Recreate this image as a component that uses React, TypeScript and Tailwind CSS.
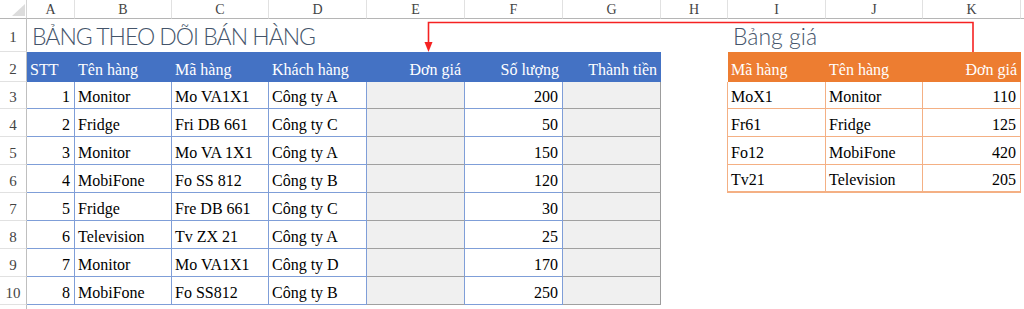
import React from 'react';

const serif = "font-['Liberation_Serif','Times_New_Roman',serif]";

const sales: [number, string, string, string, number][] = [
    [1, 'Monitor', 'Mo VA1X1', 'Công ty A', 200],
    [2, 'Fridge', 'Fri DB 661', 'Công ty C', 50],
    [3, 'Monitor', 'Mo VA 1X1', 'Công ty A', 150],
    [4, 'MobiFone', 'Fo SS 812', 'Công ty B', 120],
    [5, 'Fridge', 'Fre DB 661', 'Công ty C', 30],
    [6, 'Television', 'Tv ZX 21', 'Công ty A', 25],
    [7, 'Monitor', 'Mo VA1X1', 'Công ty D', 170],
    [8, 'MobiFone', 'Fo SS812', 'Công ty B', 250],
];

const prices: [string, string, number][] = [
    ['MoX1', 'Monitor', 110],
    ['Fr61', 'Fridge', 125],
    ['Fo12', 'MobiFone', 420],
    ['Tv21', 'Television', 205],
];

const letters = ['A', 'B', 'C', 'D', 'E', 'F', 'G', 'H', 'I', 'J', 'K'];

function RowNum({ n }: { n: number | string }) {
    return (
        <div className={`flex items-center justify-center pt-[5px] border-r border-r-[#bfbfbf] border-b border-b-[#e1e1e1] text-[15px] text-[#444] ${serif}`}>
            {n}
        </div>
    );
}

export default function App() {
    const head = `flex items-end pb-[4px] text-white text-[16px] leading-none whitespace-nowrap ${serif}`;
    return (
        <div className={`relative w-[1024px] h-[309px] overflow-hidden bg-white text-black ${serif}`}>
            <div className="grid grid-cols-[27px_48px_97px_97px_98px_98px_98px_98px_67px_98px_97px_98px_3px] grid-rows-[19px_33px_30px_27px_28px_28px_28px_28px_28px_28px_28px_4px]">
                {/* column headers */}
                <div className="relative border-r border-r-[#d4d4d4] border-b border-b-[#b5b5b5]">
                    <svg className="absolute left-0 top-0" width="27" height="19">
                        <polygon points="12,16 25,16 25,4" fill="#dcdcdc" />
                    </svg>
                </div>
                {letters.map((l) => (
                    <div key={l} className={`flex items-center justify-center border-r border-r-[#e1e1e1] border-b border-b-[#b5b5b5] text-[14px] text-[#444] ${serif}`}>
                        {l}
                    </div>
                ))}
                <div className="border-b border-b-[#b5b5b5]" />

                {/* row 1: titles */}
                <RowNum n={1} />
                <div className="col-span-7 flex items-end pl-[5px] pb-[4px] font-['Lato',sans-serif] font-light text-[23px] tracking-[-1px] leading-none text-[#44546a] whitespace-nowrap">
                    BẢNG THEO DÕI BÁN HÀNG
                </div>
                <div />
                <div className="col-span-3 flex items-end pl-[5px] pb-[4px] font-['Lato',sans-serif] font-light text-[23px] leading-none text-[#44546a] whitespace-nowrap">
                    Bảng giá
                </div>
                <div />

                {/* row 2: headers */}
                <RowNum n={2} />
                {['STT', 'Tên hàng', 'Mã hàng', 'Khách hàng'].map((h) => (
                    <div key={h} className={`${head} pl-[3px] bg-[#4472c4]`}>
                        {h}
                    </div>
                ))}
                {['Đơn giá', 'Số lượng', 'Thành tiền'].map((h) => (
                    <div key={h} className={`${head} justify-end pr-[4px] bg-[#4472c4]`}>
                        {h}
                    </div>
                ))}
                <div />
                <div className={`${head} pl-[3px] bg-[#ed7d31]`}>Mã hàng</div>
                <div className={`${head} pl-[3px] bg-[#ed7d31]`}>Tên hàng</div>
                <div className={`${head} justify-end pr-[4px] bg-[#ed7d31]`}>Đơn giá</div>
                <div />

                {/* rows 3-10 */}
                {sales.map(([stt, name, code, cust, qty], i) => {
                    const price = prices[i];
                    const last = i === prices.length - 1;
                    const cell = `flex items-end pb-[3px] text-[16px] leading-none whitespace-nowrap border-r border-r-[#7f9ed8] border-b border-b-[#7f9ed8] ${serif}`;
                    const grey = 'bg-[#f0f0f0] border-b border-b-[#a0a0a0]';
                    const orange = `flex items-end pb-[3px] text-[16px] leading-none whitespace-nowrap border-r border-r-[#f4b084] ${last ? 'border-b-2' : 'border-b'} border-b-[#f4b084] ${serif}`;
                    return (
                        <React.Fragment key={stt}>
                            <RowNum n={i + 3} />
                            <div className={`${cell} justify-end pr-[4px]`}>{stt}</div>
                            <div className={`${cell} pl-[3px]`}>{name}</div>
                            <div className={`${cell} pl-[3px]`}>{code}</div>
                            <div className={`${cell} pl-[3px]`}>{cust}</div>
                            <div className={`${grey} border-r border-r-[#7f9ed8]`} />
                            <div className={`${cell} justify-end pr-[4px]`}>{qty}</div>
                            <div className={`${grey} border-r border-r-[#9c9c9c]`} />
                            <div className={price ? 'border-r border-r-[#f4b084]' : ''} />
                            {price ? (
                                <>
                                    <div className={`${orange} pl-[3px]`}>{price[0]}</div>
                                    <div className={`${orange} pl-[3px]`}>{price[1]}</div>
                                    <div className={`${orange} justify-end pr-[4px]`}>{price[2]}</div>
                                </>
                            ) : (
                                <>
                                    <div />
                                    <div />
                                    <div />
                                </>
                            )}
                            <div />
                        </React.Fragment>
                    );
                })}

                {/* row 11 (cut off) */}
                <div className="border-r border-r-[#bfbfbf]" />
            </div>

            {/* lookup arrow */}
            <svg className="absolute left-0 top-0 pointer-events-none" width="1024" height="309">
                <polyline points="973,52 973,22.5 428.5,22.5 428.5,44" fill="none" stroke="#f52222" strokeWidth="1.6" />
                <polygon points="424.5,42 432.5,42 428.5,52" fill="#f52222" />
            </svg>
        </div>
    );
}
